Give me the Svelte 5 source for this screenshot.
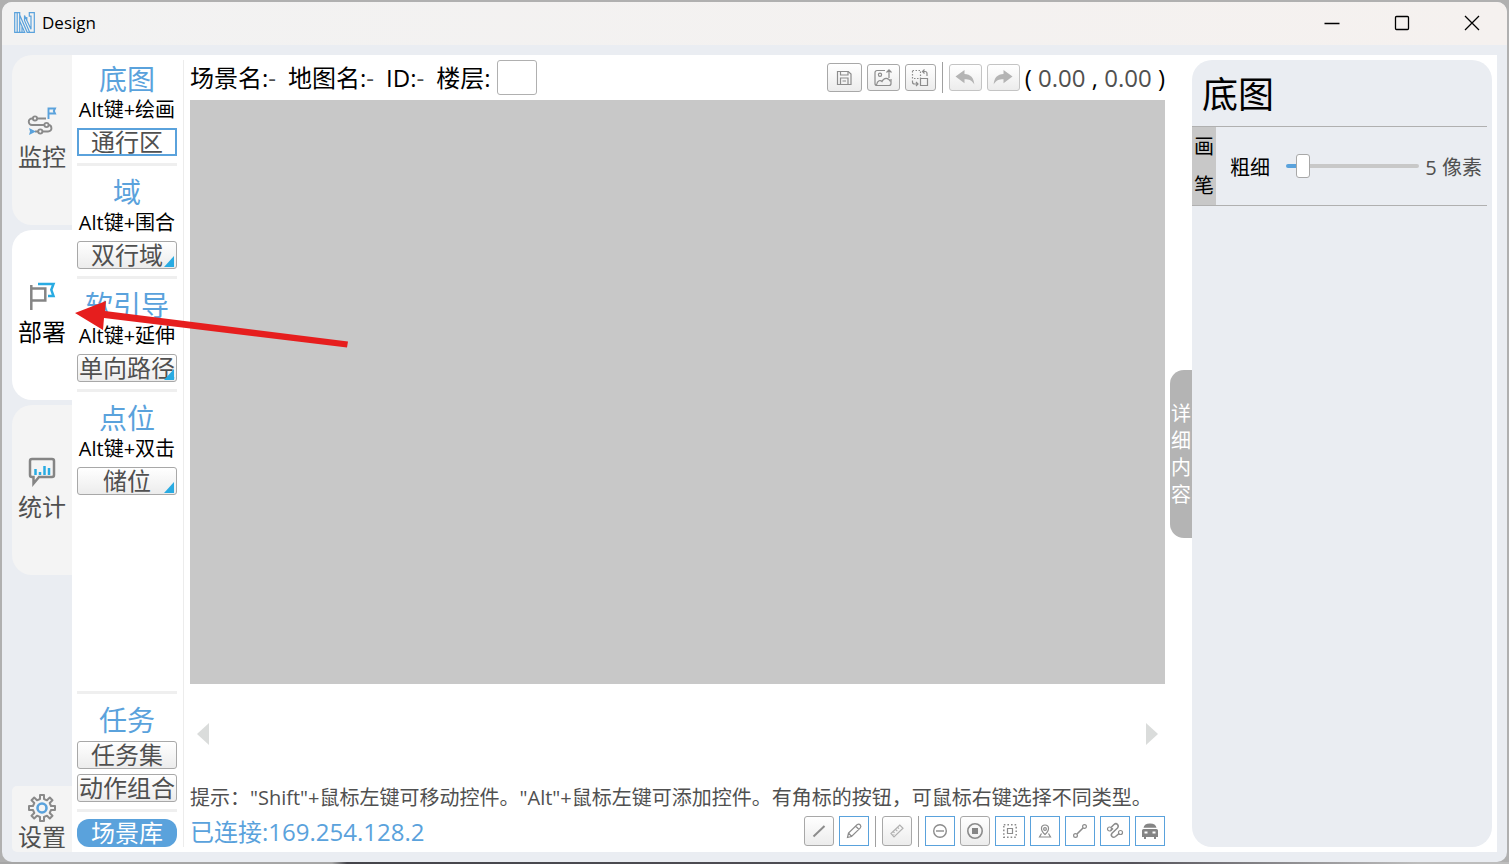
<script lang="ts">
  type Tool = { title: string; hint: string; label: string; corner: boolean; active: boolean };

  const tabs = [
    { id: "monitor", label: "监控" },
    { id: "deploy", label: "部署" },
    { id: "stats", label: "统计" },
  ];

  const tools: Tool[] = [
    { title: "底图", hint: "Alt键+绘画", label: "通行区", corner: false, active: true },
    { title: "域", hint: "Alt键+围合", label: "双行域", corner: true, active: false },
    { title: "软引导", hint: "Alt键+延伸", label: "单向路径", corner: true, active: false },
    { title: "点位", hint: "Alt键+双击", label: "储位", corner: true, active: false },
  ];

  const viewTools = [
    { id: "line", label: "直线", on: false },
    { id: "pencil", label: "铅笔", on: true },
    { id: "sep", label: "", on: false },
    { id: "ruler", label: "标尺", on: false },
    { id: "sep", label: "", on: false },
    { id: "minus", label: "禁行", on: true },
    { id: "stop", label: "停止", on: false },
    { id: "area", label: "区域", on: true },
    { id: "pin", label: "点位", on: true },
    { id: "link", label: "连线", on: true },
    { id: "curve", label: "路径", on: true },
    { id: "car", label: "车辆", on: true },
  ];

  const minWidth = 1;
  const maxWidth = 50;

  let activeTab = $state("deploy");
  let floor = $state("");
  let brush = $state(5);
  let fill = $derived(((brush - minWidth) / (maxWidth - minWidth)) * 100);
</script>

{#snippet icon(name: string)}
  {#if name === "monitor"}
    <svg class="icon-nav" viewBox="0 0 28 28" fill="none" stroke="#8a8a8a" stroke-width="1.900">
      <path d="M5 11.500H4a3.200 3.200 0 0 0 0 6.500H16M9 11.500h9" />
      <path d="M20.500 18c3.500 0 4.500 6.500-.5 6.500h-5.500M10 24.500H7" />
      <circle cx="7" cy="11.500" r="2.100" />
      <circle cx="18.500" cy="18" r="2.100" />
      <circle cx="12.300" cy="24.500" r="2.100" />
      <path d="M20.500 12V1.500h6.500l-1.200 2.500L27 6.500h-6.500" stroke="#5aa2dc" />
      <path d="M1 21l7 3.500L1 28l1-3.500z" fill="#5aa2dc" stroke="none" />
    </svg>
  {:else if name === "deploy"}
    <svg class="icon-nav" viewBox="0 0 28 28" fill="none" stroke-width="2.500">
      <path d="M10 2h15.500l-2.200 5.800 2.200 6.200H20" stroke="#29abe2" />
      <path d="M3.300 3v25M3.300 6.500h14v12h-14" stroke="#858585" />
    </svg>
  {:else if name === "stats"}
    <svg class="icon-nav" viewBox="0 0 28 28" fill="none" stroke-width="2.500">
      <path d="M4 2h20a2 2 0 0 1 2 2v14a2 2 0 0 1-2 2H11l-5.500 6.500V20H4a2 2 0 0 1-2-2V4a2 2 0 0 1 2-2z" stroke="#858585" />
      <path d="M7.500 12v6M12 15v3M16.500 9v9M21 11v7" stroke="#29abe2" />
    </svg>
  {:else if name === "settings"}
    <svg class="icon-nav" viewBox="0 0 28 28" fill="none" stroke-width="2">
      <path
        d="M12 1h4v4l3 1.300 2.800-2.800 2.700 2.700-2.800 2.800L23 12h4v4h-4l-1.300 3 2.800 2.800-2.700 2.700-2.800-2.800L16 23v4h-4v-4l-3-1.300-2.800 2.800-2.700-2.700L6.300 19 5 16H1v-4h4l1.300-3-2.800-2.800 2.700-2.700L9 6.300 12 5z"
        stroke="#8a8a8a"
        stroke-linejoin="round"
      />
      <circle cx="14" cy="14" r="4.500" stroke="#5aa2dc" stroke-width="2.600" />
    </svg>
  {:else if name === "save"}
    <svg class="icon" viewBox="0 0 20 20">
      <path d="M3.500 3.500h10.800L17 6v10.500H3.500z" />
      <path d="M6.500 3.500v3.500h7.500v-3.500M6.500 16v-6h7.500v6M8.500 13h3.500" />
    </svg>
  {:else if name === "image"}
    <svg class="icon" viewBox="0 0 20 20">
      <path d="M12 2.500H4a2 2 0 0 0-2 2v11a2 2 0 0 0 2 2h12a2 2 0 0 0 2-2V11" />
      <circle cx="7" cy="6.800" r="1.600" />
      <path d="M3.500 17c1-5 4-5 5.500-3.500 2-4.500 6.500-4 8.500 0M16 10V2M13.500 4.500L16 1.800l2.500 2.700" />
    </svg>
  {:else if name === "swap"}
    <svg class="icon" viewBox="0 0 20 20">
      <path d="M2.500 2.500h8v8h-8z" stroke-dasharray="1.500 1.500" />
      <path d="M10.500 10.500h7v7h-7zM12.500 3.500H15a2 2 0 0 1 2 2V8M14.500 1.500l-2 2 2 2M2.500 12.500v1.500a2 2 0 0 0 2 2H8M6 14l2 2-2 2" />
    </svg>
  {:else if name === "undo"}
    <svg class="icon icon--solid" viewBox="0 0 20 20"><path d="M.5 8.500L9.500 2v3.900c6 .2 9.500 3.900 9.800 10.600-2.300-4-5-5.200-9.800-5.200v3.900z" /></svg>
  {:else if name === "redo"}
    <svg class="icon icon--solid" viewBox="0 0 20 20"><path d="M19.500 8.500L10.500 2v3.900C4.500 6.100 1 9.800.7 16.500c2.300-4 5-5.200 9.800-5.200v3.900z" /></svg>
  {:else if name === "line"}
    <svg class="icon" viewBox="0 0 20 20"><path d="M4.500 15.500l11-10.500" stroke-width="2" /></svg>
  {:else if name === "pencil"}
    <svg class="icon" viewBox="0 0 20 20"><path d="M3.500 16.500l1-4.500 8.500-8.300q2-1.200 3.300.3t-.2 3.200L7.500 15.500zM4.500 12l3 3.300M11.500 5l3.500 3.500" /></svg>
  {:else if name === "ruler"}
    <svg class="icon icon--pale" viewBox="0 0 20 20"><path d="M4 12.500L12.800 4l3.200 3.300L7 16zM6 10.300l1.500 1.500M8.300 8.200l2 2M10.500 6.100l1.500 1.500M6.500 13.500h.8" /></svg>
  {:else if name === "minus"}
    <svg class="icon" viewBox="0 0 20 20"><circle cx="10" cy="10" r="6.300" stroke-width="1.400" /><path d="M6 10h8" stroke-width="1.400" /></svg>
  {:else if name === "stop"}
    <svg class="icon" viewBox="0 0 20 20"><circle cx="10" cy="10" r="7.200" stroke-width="1.600" /><path class="solid" d="M7 7h6v6H7z" /></svg>
  {:else if name === "area"}
    <svg class="icon" viewBox="0 0 20 20"><path d="M3.800 3.800h12.400v12.400H3.800z" stroke-width="1.500" stroke-dasharray="1.600 2" /><path d="M7.500 7.500h5v5h-5z" /></svg>
  {:else if name === "pin"}
    <svg class="icon" viewBox="0 0 20 20"><path d="M10 13.500C4.800 9 5.800 4 10 4s5.200 5 0 9.500zM6.500 12.500L4.500 16h11l-2-3.500" /><circle cx="10" cy="8" r="1.400" /></svg>
  {:else if name === "link"}
    <svg class="icon" viewBox="0 0 20 20"><circle cx="5.500" cy="14.500" r="1.900" /><circle cx="14.500" cy="5.500" r="1.900" /><path d="M7 13l6-6" stroke-width="1.600" /></svg>
  {:else if name === "curve"}
    <svg class="icon" viewBox="0 0 20 20"><circle cx="4.500" cy="8" r="2" /><circle cx="15.500" cy="11.500" r="2" /><path d="M6 6.500l3-3q2-1.700 3.500 0t0 3.500l-5.500 5.200q-1.500 1.800 0 3.300t3.500 0l3.500-2.800M6 9.300l2-1.900" stroke-width="1.500" /></svg>
  {:else if name === "car"}
    <svg class="icon" viewBox="0 0 20 20">
      <path class="solid" d="M3.500 6.800q.7-4.300 6.500-4.300t6.500 4.300zM2 9.500q0-1.500 1.500-1.500h13q1.500 0 1.500 1.500V16h-2v2h-2v-2H6v2H4v-2H2z" />
      <path d="M4.500 11.500h3M12.500 11.500h3" stroke="#fff" stroke-width="2" />
    </svg>
  {/if}
{/snippet}

<div class="desktop">
  <div class="window">
    <header class="titlebar">
      <svg class="titlebar__logo" viewBox="0 0 21 21" fill="none" stroke="#5aa2dc" stroke-width="1.200">
        <path d="M.7.7h5v19.600h-5zM3.200 1v19M5.700 3l7.500 17.300h7.100V.7h-5v3.500h1.700v13L10.500 3.500v5l5 11.500M5.700 9l5 11.300h-5M8 14v6M12.800 5v4" />
      </svg>
      <span class="titlebar__title">Design</span>
      <div class="titlebar__controls">
        <button aria-label="最小化"><svg viewBox="0 0 16 16"><path d="M.5 8.500h15" /></svg></button>
        <button aria-label="最大化"><svg viewBox="0 0 16 16"><rect x="1.500" y="1.500" width="13" height="13" rx="1" /></svg></button>
        <button aria-label="关闭"><svg viewBox="0 0 16 16"><path d="M1 1l14 14M15 1L1 15" /></svg></button>
      </div>
    </header>

    <div class="body">
      <nav class="nav">
        {#each tabs as tab}
          <button class="nav__tab" class:nav__tab--active={activeTab === tab.id} onclick={() => (activeTab = tab.id)}>
            {@render icon(tab.id)}
            <span>{tab.label}</span>
          </button>
        {/each}
        <button class="nav__settings">
          {@render icon("settings")}
          <span>设置</span>
        </button>
      </nav>

      <main class="main">
        <aside class="tools">
          {#each tools as tool, i}
            <section class="tools__group" class:tools__group--ruled={i < tools.length - 1}>
              <h2>{tool.title}</h2>
              <p>{tool.hint}</p>
              <button class="tool" class:tool--active={tool.active} class:tool--corner={tool.corner}>{tool.label}</button>
            </section>
          {/each}
          <section class="tools__tasks">
            <h2>任务</h2>
            <button class="tool">任务集</button>
            <button class="tool">动作组合</button>
          </section>
          <button class="tool tool--primary">场景库</button>
        </aside>

        <section class="stage">
          <div class="topbar">
            <span>场景名:<em>-</em></span>
            <span>地图名:<em>-</em></span>
            <span>ID:<em>-</em></span>
            <label for="floor">楼层:</label>
            <input id="floor" class="floor" bind:value={floor} />
            <div class="topbar__actions">
              <button class="action action--large" aria-label="保存">{@render icon("save")}</button>
              <button class="action" aria-label="导入图片">{@render icon("image")}</button>
              <button class="action action--small" aria-label="替换">{@render icon("swap")}</button>
              <i class="rule"></i>
              <button class="action action--muted" aria-label="撤销">{@render icon("undo")}</button>
              <button class="action action--muted" aria-label="重做">{@render icon("redo")}</button>
              <span class="coords">( <em>0.00</em> , <em>0.00</em> )</span>
            </div>
          </div>

          <div class="canvas"></div>

          <div class="carousel">
            <button aria-label="上一个"><svg viewBox="0 0 12 22"><path d="M12 0v22L0 11z" /></svg></button>
            <button aria-label="下一个"><svg viewBox="0 0 12 22"><path d="M0 0v22l12-11z" /></svg></button>
          </div>

          <p class="tip">提示："Shift"+鼠标左键可移动控件。"Alt"+鼠标左键可添加控件。有角标的按钮，可鼠标右键选择不同类型。</p>

          <footer class="status">
            <span class="status__link">已连接:169.254.128.2</span>
            {#each viewTools as item}
              {#if item.id === "sep"}
                <i class="rule"></i>
              {:else}
                <button class="view" class:view--on={item.on} aria-label={item.label}>{@render icon(item.id)}</button>
              {/if}
            {/each}
          </footer>
        </section>

        <button class="drawer">详细内容</button>

        <aside class="panel">
          <h1>底图</h1>
          <div class="brush">
            <div class="brush__tag"><span>画</span><span>笔</span></div>
            <label for="brush">粗细</label>
            <input id="brush" type="range" min={minWidth} max={maxWidth} bind:value={brush} style={`--fill: ${fill}%`} />
            <output for="brush">{brush} 像素</output>
          </div>
        </aside>
      </main>
    </div>
  </div>

  <svg class="pointer" viewBox="0 0 273 32" aria-hidden="true">
    <path d="M0 0L31-12 30-2 273 28.500 272 34.500 29 5 28 17z" />
  </svg>
</div>

<style>
  :global(body) {
    margin: 0;
  }

  .desktop {
    --blue: #5aa2dc;
    --mist: #eaedf2;
    --grey: #c8c8c8;
    --text: #505050;
    position: relative;
    box-sizing: border-box;
    height: 100vh;
    padding: 2px;
    background: linear-gradient(90deg, #a6a6a6 22%, #45454b 23%, #55535a 75%, #bdbdbd 94%) bottom / 100% 2px no-repeat, #b0b0b0;
    font-family: "Open Sans", "Noto Sans CJK SC", sans-serif;
    font-size: 24px;
    color: #000;
  }

  button,
  input {
    box-sizing: border-box;
    margin: 0;
    padding: 0;
    font: inherit;
    color: inherit;
  }

  button {
    border: 0;
    background: none;
  }

  h1,
  h2,
  p {
    margin: 0;
    font-weight: 400;
  }

  em {
    font-style: normal;
    color: var(--text);
  }

  .window {
    display: flex;
    flex-direction: column;
    height: 100%;
    overflow: hidden;
    border-radius: 10px;
    background: var(--mist);
  }

  .titlebar {
    box-sizing: border-box;
    display: flex;
    align-items: center;
    flex: none;
    height: 43px;
    padding: 0 0 2px 12px;
    background: linear-gradient(90deg, #f2f2f2, #f5f1ef);
  }

  .titlebar__logo {
    width: 21px;
    height: 21px;
  }

  .titlebar__title {
    margin-left: 7px;
    font-size: 17px;
  }

  .titlebar__controls {
    display: flex;
    margin-left: auto;
  }

  .titlebar__controls button {
    display: grid;
    place-items: center;
    width: 70px;
    height: 40px;
  }

  .titlebar__controls svg {
    width: 16px;
    height: 16px;
    fill: none;
    stroke: #000;
    stroke-width: 1.3;
  }

  .body {
    display: flex;
    flex: 1;
    min-height: 0;
    padding: 10px;
  }

  .nav {
    display: flex;
    flex-direction: column;
    gap: 5px;
    width: 60px;
  }

  .nav button {
    display: flex;
    flex-direction: column;
    align-items: center;
    justify-content: center;
    background: #f4f4f4;
    color: var(--text);
    line-height: 32px;
  }

  .nav .nav__tab {
    gap: 6px;
    height: 170px;
    border-radius: 20px 0 0 20px;
  }

  .nav .nav__tab--active {
    background: #fff;
    color: #000;
  }

  .nav .nav__settings {
    height: 66px;
    margin-top: auto;
    padding-top: 7px;
    border-radius: 5px 0 0 5px;
    line-height: 30px;
  }

  .icon-nav {
    width: 28px;
    height: 28px;
    overflow: visible;
  }

  .main {
    display: flex;
    flex: 1;
    min-width: 0;
    padding: 5px 5px 5px 0;
    background: #fff;
  }

  .tools {
    display: flex;
    flex-direction: column;
    width: 100px;
    padding: 0 6px 0 5px;
    border-right: 1px solid #ececec;
  }

  .tools h2 {
    margin-bottom: 2px;
    color: var(--blue);
    font-size: 28px;
    line-height: 38px;
    text-align: center;
  }

  .tools p {
    margin-bottom: 8px;
    font-size: 20px;
    line-height: 20px;
    text-align: center;
    white-space: nowrap;
  }

  .tools__group--ruled {
    margin-bottom: 7px;
    padding-bottom: 7px;
    border-bottom: 3px solid #efefef;
  }

  .tools__tasks {
    display: flex;
    flex-direction: column;
    margin-top: auto;
    margin-bottom: 7px;
    padding: 7px 0 7px;
    border-top: 3px solid #efefef;
    border-bottom: 3px solid #efefef;
  }

  .tools__tasks .tool + .tool {
    margin-top: 5px;
  }

  .tool {
    position: relative;
    display: block;
    width: 100px;
    height: 28px;
    border: 1px solid #a8a8a8;
    border-radius: 3px;
    background: linear-gradient(#fff, #ececec);
    color: var(--text);
    line-height: 26px;
    text-align: center;
    white-space: nowrap;
  }

  .tool--active {
    border: 2px solid var(--blue);
    border-radius: 0;
    background: #fff;
    line-height: 24px;
  }

  .tool--corner::after {
    content: "";
    position: absolute;
    right: 2px;
    bottom: 1px;
    border-bottom: 11px solid #29abe2;
    border-left: 10px solid transparent;
  }

  .tool--primary {
    flex: none;
    border: 0;
    border-radius: 12px;
    background: var(--blue);
    color: #fff;
    line-height: 28px;
  }

  .stage {
    display: flex;
    flex-direction: column;
    flex: 1;
    min-width: 0;
    padding: 0 5px 0 6px;
  }

  .topbar {
    display: flex;
    align-items: center;
    height: 35px;
    margin-bottom: 5px;
    line-height: 36px;
    white-space: nowrap;
  }

  .topbar > span {
    margin-right: 12px;
  }

  .floor {
    width: 40px;
    height: 35px;
    margin-left: 6px;
    border: 1px solid #b0b0b0;
    border-radius: 3px;
    background: #fff;
    text-align: center;
  }

  .topbar__actions {
    display: flex;
    align-items: center;
    gap: 5px;
    margin-left: auto;
  }

  .action,
  .view {
    display: grid;
    place-items: center;
    border: 1px solid #a8a8a8;
    border-radius: 3px;
    background: linear-gradient(#fff, #ececec);
  }

  .action {
    width: 33px;
    height: 27px;
  }

  .action--large {
    width: 35px;
    height: 29px;
  }

  .action--small {
    width: 31px;
  }

  .action--muted {
    border-color: #c4c4c4;
  }

  .icon {
    width: 20px;
    height: 20px;
    fill: none;
    stroke: #8c8c8c;
    stroke-width: 1.2;
  }

  .icon--pale {
    stroke: #b0b0b0;
  }

  .icon--solid {
    fill: #b4b4b4;
    stroke: none;
  }

  .icon .solid {
    fill: #858585;
    stroke: none;
  }

  .rule {
    flex: none;
    width: 1px;
    height: 31px;
    margin: 0 1px;
    background: #a0a0a0;
  }

  .canvas {
    flex: 1;
    background: var(--grey);
  }

  .carousel {
    display: flex;
    align-items: center;
    justify-content: space-between;
    height: 100px;
    padding: 0 7px;
  }

  .carousel button {
    width: 12px;
    height: 22px;
  }

  .carousel svg {
    display: block;
    fill: #dadcdb;
  }

  .tip {
    height: 32px;
    color: var(--text);
    font-size: 20px;
    line-height: 28px;
    white-space: nowrap;
  }

  .status {
    display: flex;
    align-items: flex-start;
    gap: 5px;
    height: 31px;
  }

  .status__link {
    margin-right: auto;
    color: var(--blue);
    line-height: 31px;
  }

  .view {
    width: 30px;
    height: 30px;
  }

  .view--on {
    border-color: var(--blue);
    border-radius: 0;
    background: #fff;
  }

  .drawer {
    align-self: center;
    width: 22px;
    height: 168px;
    border-radius: 14px 0 0 14px;
    background: #b4b4b4;
    color: #fff;
    font-size: 20px;
    line-height: 27px;
    word-break: break-all;
  }

  .panel {
    width: 300px;
    border-radius: 20px;
    background: var(--mist);
  }

  .panel h1 {
    padding: 4px 0 0 10px;
    font-size: 36px;
    line-height: 62px;
  }

  .brush {
    display: flex;
    align-items: center;
    height: 78px;
    margin-right: 5px;
    border-top: 1px solid #b0b0b0;
    border-bottom: 1px solid #b0b0b0;
    font-size: 20px;
  }

  .brush__tag {
    display: flex;
    flex-direction: column;
    align-items: center;
    width: 24px;
    margin-right: 14px;
    background: var(--grey);
    line-height: 39px;
  }

  .brush input {
    flex: 1;
    min-width: 0;
    height: 24px;
    margin: 0 6px 0 16px;
    appearance: none;
    background: none;
  }

  .brush input::-webkit-slider-runnable-track {
    height: 4px;
    border-radius: 2px;
    background: linear-gradient(90deg, var(--blue) var(--fill), var(--grey) var(--fill));
  }

  .brush input::-webkit-slider-thumb {
    width: 14px;
    height: 24px;
    margin-top: -10px;
    appearance: none;
    border: 1px solid #a8a8a8;
    border-radius: 3px;
    background: #fff;
  }

  .brush output {
    margin-right: 5px;
    color: var(--text);
    white-space: nowrap;
  }

  .pointer {
    position: absolute;
    top: 313px;
    left: 75px;
    width: 273px;
    height: 32px;
    overflow: visible;
    fill: #e61e1e;
    pointer-events: none;
  }
</style>
